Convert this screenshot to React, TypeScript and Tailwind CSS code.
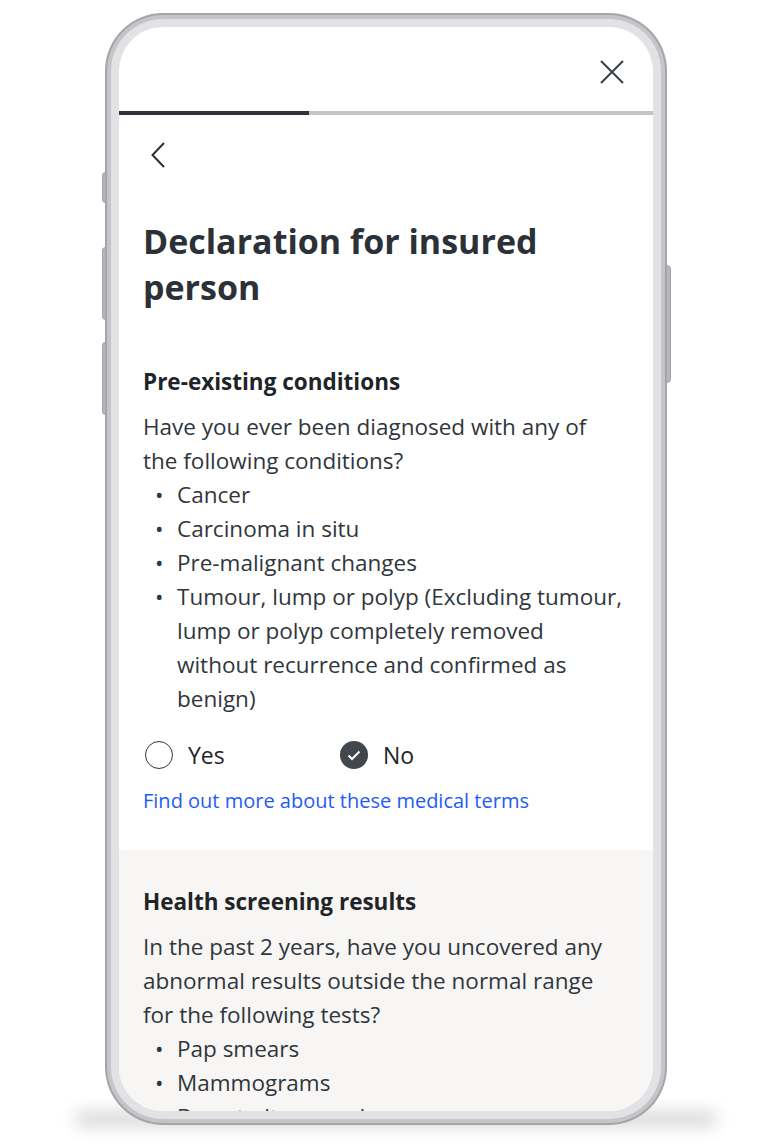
import React from 'react'

const body = "text-[22.5px] leading-[34px] text-[#30363c]"

function Bullets({ items }: { items: React.ReactNode[] }) {
  return (
    <ul className={body}>
      {items.map((item, i) => (
        <li key={i} className="flex">
          <span className="w-[34px] shrink-0 pl-[12px]">•</span>
          <span>{item}</span>
        </li>
      ))}
    </ul>
  )
}

export default function App() {
  return (
    <div className="w-[764px] h-[1148px] bg-white overflow-hidden" style={{ fontFamily: '"Open Sans", "Liberation Sans", sans-serif' }}>
      <div className="relative mt-[13px] ml-[105px] w-[562px] h-[1112px]">
        {/* ground shadow */}
        <div className="absolute left-[-30px] right-[-50px] bottom-[-2px] h-[16px] rounded-full bg-black/15 blur-[8px]" />
        {/* side buttons */}
        <div className="absolute left-[-3px] top-[159px] w-[4px] h-[31px] rounded-l-sm bg-[#b7b8bc] border border-[#a3a4a8]" />
        <div className="absolute left-[-3px] top-[234px] w-[4px] h-[73px] rounded-l-sm bg-[#b7b8bc] border border-[#a3a4a8]" />
        <div className="absolute left-[-3px] top-[329px] w-[4px] h-[73px] rounded-l-sm bg-[#b7b8bc] border border-[#a3a4a8]" />
        <div className="absolute right-[-4px] top-[252px] w-[5px] h-[118px] rounded-r-sm bg-[#b7b8bc] border border-[#a3a4a8]" />

        {/* frame */}
        <div className="relative h-full rounded-[58px] bg-[#a4a5a9] p-[2px]">
          <div className="h-full rounded-[56px] bg-[#c4c5c9] p-[4px]">
            <div className="h-full rounded-[52px] bg-[#e2e2e5] p-[8px]">
              <div className="h-full rounded-[44px] bg-white overflow-hidden flex flex-col">
                {/* header */}
                <div className="h-[84px] shrink-0 flex items-center justify-end pr-[29px]">
                  <svg width="24" height="24" viewBox="0 0 24 24" className="mt-[6px]">
                    <path d="M1 1 L23 23 M23 1 L1 23" stroke="#3a4046" strokeWidth="2" fill="none" />
                  </svg>
                </div>
                {/* progress */}
                <div className="h-[4px] shrink-0 flex bg-[#c3c4c7]">
                  <div className="w-[190px] bg-[#2f353b]" />
                </div>

                <div className="px-[24px]">
                  <div className="h-[80px] flex items-center pl-[8px]">
                    <svg width="14" height="26" viewBox="0 0 14 26">
                      <path d="M13 1 L1.5 13 L13 25" stroke="#2a3036" strokeWidth="2" fill="none" />
                    </svg>
                  </div>
                  <h1 className="mt-[23px] text-[34px] leading-[46px] font-bold text-[#2b3137]">
                    Declaration for insured person
                  </h1>
                  <h2 className="mt-[57px] text-[22.5px] leading-[30px] font-bold text-[#1f2428]">Pre-existing conditions</h2>
                  <p className={`mt-[13px] ${body}`}>
                    Have you ever been diagnosed with any of
                    <br />
                    the following conditions?
                  </p>
                  <Bullets
                    items={[
                      'Cancer',
                      'Carcinoma in situ',
                      'Pre-malignant changes',
                      <>
                        Tumour, lump or polyp (Excluding tumour,
                        <br />
                        lump or polyp completely removed
                        <br />
                        without recurrence and confirmed as
                        <br />
                        benign)
                      </>,
                    ]}
                  />
                  <div className="mt-[22px] h-[34px] flex items-center">
                    <div className="w-[197px] flex items-center pl-[2px]">
                      <div className="w-[28px] h-[28px] rounded-full border-[1.5px] border-[#2f353b]" />
                      <span className="ml-[15px] text-[23px] font-medium text-[#1f2428]">Yes</span>
                    </div>
                    <div className="flex items-center">
                      <div className="w-[28px] h-[28px] rounded-full bg-[#41474d] flex items-center justify-center">
                        <svg width="14" height="11" viewBox="0 0 14 11">
                          <path d="M1.5 5.5 L5 9 L12.5 1.5" stroke="white" strokeWidth="2" fill="none" />
                        </svg>
                      </div>
                      <span className="ml-[15px] text-[23px] font-medium text-[#1f2428]">No</span>
                    </div>
                  </div>
                  <p className="mt-[16px] text-[20px] leading-[26px] text-[#1f5cf5]">Find out more about these medical terms</p>
                </div>

                <div className="mt-[36px] flex-1 bg-[#f7f6f4] px-[24px] pt-[37px]">
                  <h2 className="text-[22.5px] leading-[30px] font-bold text-[#1f2428]">Health screening results</h2>
                  <p className={`mt-[13px] ${body}`}>
                    In the past 2 years, have you uncovered any
                    <br />
                    abnormal results outside the normal range
                    <br />
                    for the following tests?
                  </p>
                  <Bullets items={['Pap smears', 'Mammograms', 'Breast ultrasound']} />
                </div>
              </div>
            </div>
          </div>
        </div>
      </div>
    </div>
  )
}
